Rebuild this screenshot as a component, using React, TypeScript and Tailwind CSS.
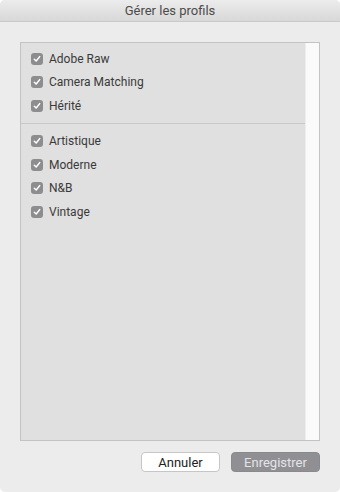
import React from "react";

const groups = [
  ["Adobe Raw", "Camera Matching", "Hérité"],
  ["Artistique", "Moderne", "N&B", "Vintage"],
];

function Check() {
  return (
    <span className="flex h-[12px] w-[12px] items-center justify-center rounded-[3px] bg-[#8d8d90]">
      <svg width="8" height="8" viewBox="0 0 8 8" fill="none">
        <path d="M1.3 4.2 L3.2 6 L6.7 1.6" stroke="white" strokeWidth="1.5" strokeLinecap="round" strokeLinejoin="round" />
      </svg>
    </span>
  );
}

export default function App() {
  return (
    <div
      className="flex h-[492px] w-[340px] flex-col overflow-hidden rounded-[5px] bg-[#ececec] text-[#333]"
      style={{ fontFamily: "'Helvetica Neue', Roboto, 'Liberation Sans', sans-serif" }}
    >
      {/* title bar */}
      <div className="flex h-[22px] items-center justify-center border-b border-[#c9c9c9] bg-gradient-to-b from-[#ececec] to-[#d8d8d8] text-[13px] text-[#4b4b4b]">
        Gérer les profils
      </div>

      <div className="flex flex-1 flex-col px-[20px] pt-[20px]">
        <div className="flex h-[399px] border border-[#c3c3c3] bg-[#e0e0e0]">
          <div className="flex flex-1 flex-col pt-[4px]">
            {groups.map((g, gi) => (
              <div key={gi} className={gi > 0 ? "border-t border-[#c8c8c8] pt-[6px]" : "pb-[5px]"}>
                {g.map((label) => (
                  <div key={label} className="flex h-[23.5px] items-center gap-[6px] pl-[10px] text-[12px] text-[#3a3a3a]">
                    <Check />
                    <span>{label}</span>
                  </div>
                ))}
              </div>
            ))}
          </div>
          <div className="w-[14px] border-l border-[#ededed] bg-[#fafafa]" />
        </div>

        <div className="mt-[11px] flex justify-end gap-[11px]">
          <button className="h-[20px] w-[79px] rounded-[4px] border border-[#c6c6c6] bg-white text-[13px] leading-none text-[#222]">
            Annuler
          </button>
          <button className="h-[20px] w-[89px] rounded-[4px] border border-[#8a8a8d] bg-[#909094] text-[13px] leading-none text-[#e4e4e6]">
            Enregistrer
          </button>
        </div>
      </div>
    </div>
  );
}
